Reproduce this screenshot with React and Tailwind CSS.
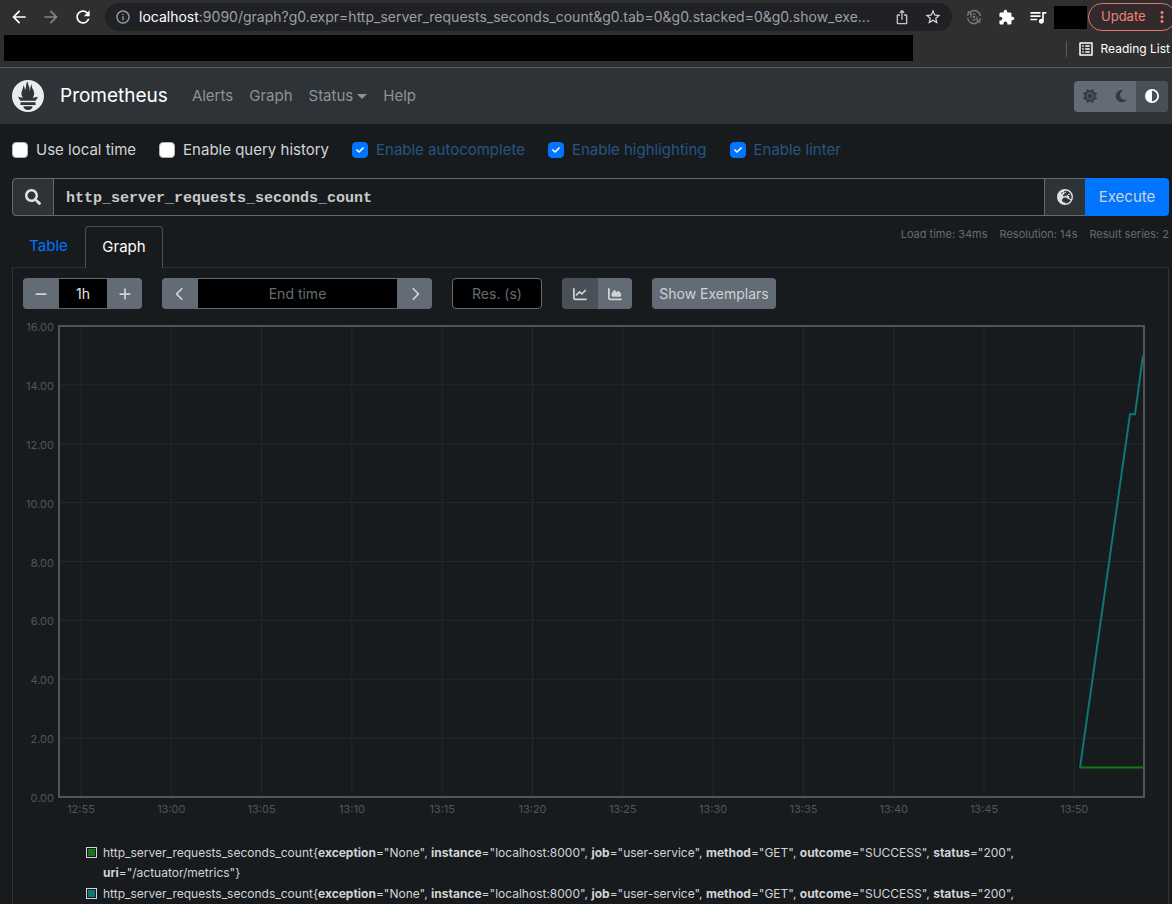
import { useState } from "react";
import { FaCheck, FaSearch } from "react-icons/fa";
import {
  FaChartArea,
  FaChartLine,
  FaChevronLeft,
  FaChevronRight,
  FaCircleHalfStroke,
  FaEarthEurope,
  FaMinus,
  FaMoon,
  FaPlus,
  FaSun,
} from "react-icons/fa6";
import {
  MdArrowBack,
  MdArrowForward,
  MdExtension,
  MdInfoOutline,
  MdIosShare,
  MdMoreVert,
  MdOutlineListAlt,
  MdQueueMusic,
  MdRefresh,
  MdStarBorder,
} from "react-icons/md";
import { SiPrometheus } from "react-icons/si";

const options = [
  { id: "local-time", label: "Use local time", checked: false },
  { id: "history", label: "Enable query history", checked: false },
  { id: "autocomplete", label: "Enable autocomplete", checked: true },
  { id: "highlighting", label: "Enable highlighting", checked: true },
  { id: "linter", label: "Enable linter", checked: true },
];

const labels = [
  ["exception", "None"],
  ["instance", "localhost:8000"],
  ["job", "user-service"],
  ["method", "GET"],
  ["outcome", "SUCCESS"],
  ["status", "200"],
];

const series = [
  { id: 1, uri: "/actuator/metrics", swatch: "bg-[#147814]" },
  { id: 2, swatch: "bg-[#0f7575]" },
];

const yTicks = [16, 14, 12, 10, 8, 6, 4, 2, 0];
const xTicks = ["12:55", "13:00", "13:05", "13:10", "13:15", "13:20", "13:25", "13:30", "13:35", "13:40", "13:45", "13:50"];

const plot = { left: 36, top: 7, width: 1085, height: 471 };
const yFor = (value) => plot.top + plot.height - (value / 16) * plot.height;
const xFor = (index) => 58 + index * 90.3;

function SyncIcon() {
  return (
    <svg viewBox="0 0 16 16" className="size-4" fill="none" stroke="currentColor" strokeWidth="1.4">
      <path d="M5 2.2A6.5 6.5 0 0 1 14.4 7M11 13.8A6.5 6.5 0 0 1 1.6 9" />
      <path d="M1.6 7A6.5 6.5 0 0 1 3 3.8M14.4 9A6.5 6.5 0 0 1 13 12.2" />
      <path d="M1.5 3h3.2v3.2M14.5 13h-3.2V9.8" />
      <path d="M4.8 8.6a3.3 3.3 0 0 1 5-3.2M11.2 7.4a3.3 3.3 0 0 1-5 3.2" strokeWidth="1" />
      <circle cx="8" cy="8" r="1.2" fill="currentColor" stroke="none" />
    </svg>
  );
}

function BrowserBar() {
  return (
    <div className="shrink-0 border-b border-[#5c5f62] bg-[#2f2f2f] text-white">
      <div className="flex h-[34px] items-center">
        <button type="button" aria-label="Back" className="ml-[9px]"><MdArrowBack size={20} /></button>
        <button type="button" aria-label="Forward" className="ml-3 text-[#858585]"><MdArrowForward size={20} /></button>
        <button type="button" aria-label="Reload" className="ml-3"><MdRefresh size={20} /></button>
        <div className="ml-3 flex h-7 min-w-0 flex-1 items-center rounded-full bg-[#202124] pr-2.5 pl-2.5 text-[#9aa0a6]">
          <MdInfoOutline size={16} className="shrink-0" />
          <span className="ml-2 flex-1 text-sm whitespace-nowrap">
            <span className="text-white">localhost</span>
            :9090/graph?g0.expr=http_server_requests_seconds_count&amp;g0.tab=0&amp;g0.stacked=0&amp;g0.show_exe...
          </span>
          <button type="button" aria-label="Share" className="text-[#c4c7c9]"><MdIosShare size={16} /></button>
          <button type="button" aria-label="Bookmark" className="ml-3.5 text-[#dadce0]"><MdStarBorder size={18} /></button>
        </div>
        <button type="button" aria-label="Sync" className="ml-3.5 text-[#7c7c7c]"><SyncIcon /></button>
        <button type="button" aria-label="Extensions" className="ml-4"><MdExtension size={17} /></button>
        <button type="button" aria-label="Media" className="ml-[13px]"><MdQueueMusic size={20} /></button>
        <div className="ml-1.5 h-[23px] w-[33px] bg-black" />
        <button type="button" className="-mr-1 ml-px flex h-7 w-[88px] items-center justify-between rounded-full border border-[#e3756b] bg-[#322a2a] pr-1 pl-3 text-[13px] text-[#ee8278]">
          Update
          <MdMoreVert size={18} />
        </button>
      </div>
      <div className="flex h-[33px] items-start pt-px">
        <div className="ml-1 h-[26px] w-[909px] bg-black" />
        <div className="ml-auto flex h-7 items-center text-xs">
          <span className="mr-2.5 h-4 w-px bg-[#5c5c5c]" />
          <MdOutlineListAlt size={18} />
          <a href="#reading" className="mr-0.5 ml-1.5">Reading List</a>
        </div>
      </div>
    </div>
  );
}

function NavBar() {
  return (
    <nav className="flex h-14 shrink-0 items-center bg-[#2e3338] px-3 text-[15px] text-[#8f9294]">
      <SiPrometheus size={32} className="text-[#ebebeb]" />
      <a href="#home" className="ml-4 text-[19px] text-white">Prometheus</a>
      <a href="#alerts" className="ml-6">Alerts</a>
      <a href="#graph" className="ml-4">Graph</a>
      <a href="#status" className="ml-4 flex items-center">
        Status
        <span className="ml-1 border-x-[5px] border-t-[5px] border-x-transparent border-t-current" />
      </a>
      <a href="#help" className="ml-4">Help</a>
      <div className="-mr-2 ml-auto flex h-[31px] overflow-hidden rounded-sm bg-[#636c75] text-[#343a40]">
        <button type="button" aria-label="Light theme" className="flex w-8 items-center justify-center"><FaSun size={14} /></button>
        <button type="button" aria-label="Dark theme" className="flex w-[30px] items-center justify-center"><FaMoon size={14} /></button>
        <button type="button" aria-label="System theme" className="flex w-8 items-center justify-center bg-[#495057] text-white"><FaCircleHalfStroke size={14} /></button>
      </div>
    </nav>
  );
}

function Option({ id, label, checked }) {
  const [on, setOn] = useState(checked);
  return (
    <div className="flex items-center">
      <span className="relative flex size-4">
        <input
          id={id}
          type="checkbox"
          checked={on}
          onChange={() => setOn(!on)}
          className="size-4 appearance-none rounded-sm border border-[#adb5bd] bg-white checked:border-[#0075ff] checked:bg-[#0075ff]"
        />
        {on ? <FaCheck size={8} className="pointer-events-none absolute top-1 left-1 text-white" /> : null}
      </span>
      <label htmlFor={id} className={`ml-2 ${on ? "text-[#245683]" : "text-[#d2d4d6]"}`}>{label}</label>
    </div>
  );
}

function Chart() {
  const right = plot.left + plot.width;
  const bottom = plot.top + plot.height;
  return (
    <svg viewBox="0 0 1135 500" className="mt-2.5 block w-full text-[11px]">
      {yTicks.map((value) => (
        <g key={value}>
          <line x1={plot.left} x2={right} y1={yFor(value)} y2={yFor(value)} stroke="#25282b" />
          <text x="31" y={yFor(value) + 5} textAnchor="end" fill="#545454">{value.toFixed(2)}</text>
        </g>
      ))}
      {xTicks.map((time, index) => (
        <g key={time}>
          <line x1={xFor(index)} x2={xFor(index)} y1={plot.top} y2={bottom} stroke="#25282b" />
          <text x={xFor(index)} y="494" textAnchor="middle" fill="#545454">{time}</text>
        </g>
      ))}
      <rect x={plot.left} y={plot.top} width={plot.width} height={plot.height} fill="none" stroke="#545454" strokeWidth="2" />
      <path d={`M1057 ${yFor(1)}H1120`} fill="none" stroke="#147814" strokeWidth="2" />
      <path d={`M1057 ${yFor(1)}L1107 ${yFor(13)}H1112L1120 ${yFor(15)}`} fill="none" stroke="#0f7575" strokeWidth="2" />
    </svg>
  );
}

function Legend() {
  return (
    <div className="mt-6 ml-[63px] w-[960px] text-xs text-[#d2d4d6]">
      {series.map(({ id, uri, swatch }) => (
        <div key={id} className="mb-px flex items-start">
          <span className="mt-1 mr-1.5 size-[11px] shrink-0 border border-[#d2d4d6] p-px">
            <span className={`block size-full ${swatch}`} />
          </span>
          <span className="leading-5">
            http_server_requests_seconds_count{"{"}
            {labels.map(([name, value]) => (
              <span key={name}><b>{name}</b>="{value}", </span>
            ))}
            {uri ? <span className="block"><b>uri</b>="{uri}"{"}"}</span> : null}
          </span>
        </div>
      ))}
    </div>
  );
}

function GraphPanel() {
  const button = "flex items-center justify-center bg-[#636c75] text-[#ced3d8]";
  const field = "min-w-0 border-y border-[#636c75] bg-black text-center placeholder:text-[#636c75]";
  return (
    <section className="border border-[#2f3336] px-2.5 pt-2.5">
      <div className="flex h-[31px] gap-5 text-sm">
        <div className="flex overflow-hidden rounded-sm">
          <button type="button" aria-label="Shrink range" className={`${button} w-9`}><FaMinus size={14} /></button>
          <input aria-label="Range" defaultValue="1h" className={`${field} w-12 text-[#e4e6e8]`} />
          <button type="button" aria-label="Extend range" className={`${button} w-[35px]`}><FaPlus size={14} /></button>
        </div>
        <div className="flex overflow-hidden rounded-sm">
          <button type="button" aria-label="Earlier" className={`${button} w-9`}><FaChevronLeft size={14} /></button>
          <input aria-label="End time" placeholder="End time" className={`${field} w-[199px]`} />
          <button type="button" aria-label="Later" className={`${button} w-[35px]`}><FaChevronRight size={14} /></button>
        </div>
        <input aria-label="Resolution" placeholder="Res. (s)" className={`${field} w-[90px] rounded-sm border-x`} />
        <div className="flex w-[70px] overflow-hidden rounded-sm">
          <button type="button" aria-label="Line graph" className="flex w-9 items-center justify-center bg-[#495057] text-[#ced3d8]"><FaChartLine size={14} /></button>
          <button type="button" aria-label="Stacked graph" className={`${button} flex-1`}><FaChartArea size={14} /></button>
        </div>
        <button type="button" className="w-[124px] rounded-sm bg-[#636c75] text-[#ced3d8]">Show Exemplars</button>
      </div>
      <Chart />
      <Legend />
    </section>
  );
}

export default function App() {
  return (
    <div className="flex h-screen flex-col overflow-hidden bg-[#181b1e] font-['Inter',sans-serif]">
      <BrowserBar />
      <NavBar />
      <main className="min-h-0 flex-1 overflow-hidden pr-[3px] pl-3 text-[15px]">
        <div className="flex h-[54px] items-center gap-[23px] pb-0.5">
          {options.map((option) => (
            <Option key={option.id} {...option} />
          ))}
        </div>
        <form className="flex h-[38px]" onSubmit={(event) => event.preventDefault()}>
          <span className="flex w-[42px] items-center justify-center rounded-l-sm border border-[#636c75] bg-[#2e3338] text-[#dee2e6]">
            <FaSearch size={16} />
          </span>
          <input
            aria-label="Expression"
            defaultValue="http_server_requests_seconds_count"
            className="min-w-0 flex-1 border-y border-[#636c75] bg-transparent px-3 pt-1 font-['Liberation_Mono',monospace] font-bold text-[#c8cacc]"
          />
          <button type="button" aria-label="Metrics explorer" className="flex w-[41px] items-center justify-center border border-r-0 border-[#636c75] bg-[#2e3338] text-[#dee2e6]">
            <FaEarthEurope size={16} />
          </button>
          <button type="submit" className="w-[84px] rounded-r-sm bg-[#0075ff] text-[#ced3d8]">Execute</button>
        </form>
        <div className="flex h-[51px] items-end">
          <button type="button" className="h-[41px] w-[73px] text-[#0075ff]">Table</button>
          <button type="button" className="relative -mb-px h-[42px] w-[78px] rounded-t-sm border border-b-0 border-[#4a4f54] bg-[#181b1e] text-white">Graph</button>
          <div className="mb-auto ml-auto flex gap-3 pt-2.5 text-[11px] leading-4 text-[#636c75]">
            <span>Load time: 34ms</span>
            <span>Resolution: 14s</span>
            <span>Result series: 2</span>
          </div>
        </div>
        <GraphPanel />
      </main>
    </div>
  );
}
